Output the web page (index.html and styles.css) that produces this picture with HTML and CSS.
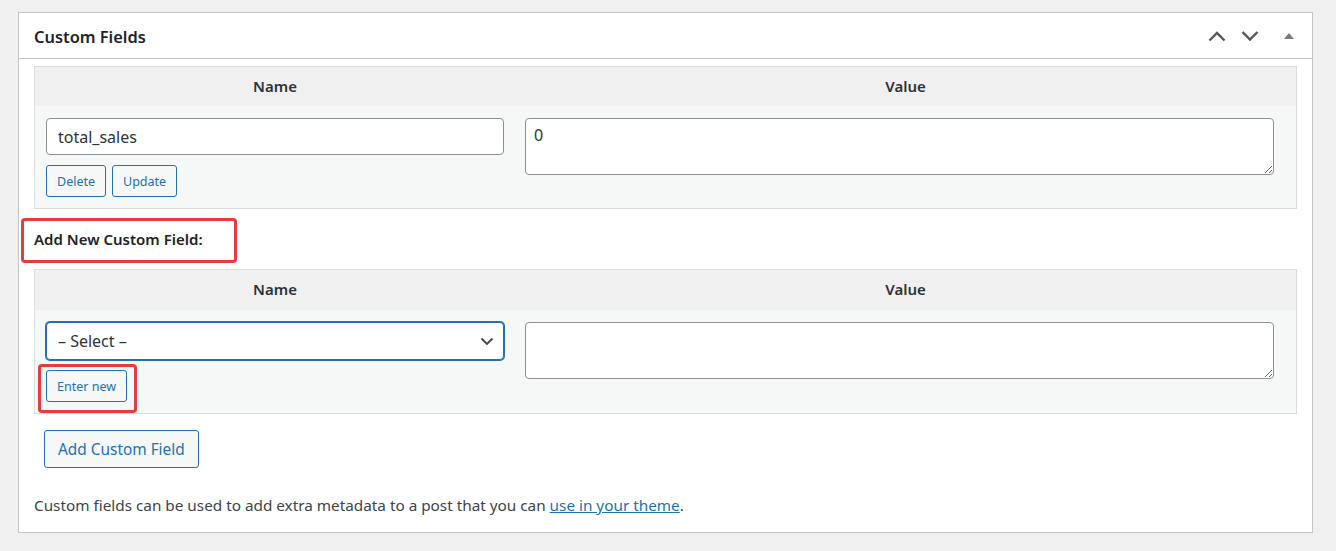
FILE: index.html
```html
<!DOCTYPE html>
<html>
<head>
<meta charset="utf-8">
<link rel="stylesheet" href="styles.css">
</head>
<body>
<div class="postbox">
  <div class="postbox-header">
    <h2 class="hndle">Custom Fields</h2>
    <div class="handle-actions">
      <button class="handle-btn" aria-label="Move up">
        <svg width="20" height="20" viewBox="0 0 20 20"><path d="M2.5 14.5 L10 7 L17.5 14.5" fill="none" stroke="#50575e" stroke-width="2.4"/></svg>
      </button>
      <button class="handle-btn" aria-label="Move down">
        <svg width="20" height="20" viewBox="0 0 20 20"><path d="M2.5 6 L10 13.5 L17.5 6" fill="none" stroke="#50575e" stroke-width="2.4"/></svg>
      </button>
      <button class="handle-btn toggle" aria-label="Toggle">
        <svg width="12" height="10" viewBox="0 0 12 10"><path d="M1 8 L6 2 L11 8 Z" fill="#787c82"/></svg>
      </button>
    </div>
  </div>
  <div class="inside">
    <table class="meta-table">
      <thead>
        <tr><th class="col-name">Name</th><th class="col-value">Value</th></tr>
      </thead>
      <tbody>
        <tr>
          <td class="col-name">
            <input class="text-input" type="text" value="total_sales">
            <div class="btn-row">
              <button class="btn-small">Delete</button>
              <button class="btn-small">Update</button>
            </div>
          </td>
          <td class="col-value">
            <textarea class="value-area">0</textarea>
          </td>
        </tr>
      </tbody>
    </table>

    <p class="add-title"><strong>Add New Custom Field:</strong><span class="highlight hl-title"></span></p>

    <table class="meta-table second">
      <thead>
        <tr><th class="col-name">Name</th><th class="col-value">Value</th></tr>
      </thead>
      <tbody>
        <tr>
          <td class="col-name">
            <div class="select-wrap">
              <select class="select-input"><option>– Select –</option></select>
              <svg class="select-arrow" width="16" height="16" viewBox="0 0 16 16"><path d="M2.5 5.5 L8 11 L13.5 5.5" fill="none" stroke="#3c434a" stroke-width="1.8"/></svg>
            </div>
            <div class="btn-row">
              <span class="enter-wrap">
                <button class="btn-small">Enter new</button>
                <span class="highlight hl-enter"></span>
              </span>
            </div>
          </td>
          <td class="col-value">
            <textarea class="value-area"></textarea>
          </td>
        </tr>
      </tbody>
    </table>

    <div class="submit-row">
      <button class="btn">Add Custom Field</button>
    </div>

    <p class="help">Custom fields can be used to add extra metadata to a post that you can <a href="#">use in your theme</a>.</p>
  </div>
</div>
</body>
</html>
```

FILE: styles.css
```css
* { box-sizing: border-box; }

html, body {
  margin: 0;
  padding: 0;
  background: #f0f0f1;
}

body {
  padding: 12px 23px 18px 18px;
  font-family: "Noto Sans", "Open Sans", sans-serif;
  font-size: 15px;
  color: #3c434a;
}

.postbox {
  background: #fff;
  border: 1px solid #c3c4c7;
  height: 521px;
}

.postbox-header {
  display: flex;
  align-items: center;
  justify-content: space-between;
  height: 46px;
  border-bottom: 1px solid #c3c4c7;
  padding: 0 0 0 15px;
}

.hndle {
  margin: 0;
  font-size: 16.4px;
  font-weight: 600;
  color: #1d2327;
  padding-top: 1px;
}

.handle-actions {
  display: flex;
  align-items: center;
}

.handle-btn {
  border: 0;
  background: none;
  padding: 0;
  width: 33px;
  height: 36px;
  display: flex;
  align-items: center;
  justify-content: center;
}

.handle-btn.toggle {
  width: 46px;
}

.inside {
  padding: 7px 15px 0 15px;
}

.meta-table {
  width: 100%;
  border: 1px solid #dcdcde;
  border-spacing: 0;
  background: #f6f7f7;
}

.meta-table th {
  background: #f0f0f1;
  height: 39px;
  font-size: 15px;
  font-weight: 600;
  color: #2c3338;
  text-align: center;
  padding: 0 0 2px 0;
}

.meta-table.second th {
  height: 40px;
}

.meta-table td {
  vertical-align: top;
  padding: 12px 11px 11px 11px;
}

.meta-table .col-name {
  width: 480px;
}

.meta-table td.col-value {
  padding: 12px 22px 11px 10px;
}

.text-input {
  display: block;
  width: 100%;
  height: 37px;
  border: 1px solid #8c8f94;
  border-radius: 4px;
  padding: 0 11px;
  font-family: inherit;
  font-size: 16px;
  color: #2c3338;
  background: #fff;
}

.value-area {
  display: block;
  width: 100%;
  height: 57px;
  border: 1px solid #8c8f94;
  border-radius: 4px;
  padding: 5px 8px;
  font-family: inherit;
  font-size: 16px;
  color: #2c3338;
  background: #fff;
  resize: vertical;
}

.btn-row {
  display: flex;
  gap: 6px;
  margin-top: 10px;
}

.btn-small {
  height: 32px;
  padding: 0 10px;
  border: 1px solid #2271b1;
  border-radius: 3px;
  background: #f6f7f7;
  color: #2271b1;
  font-family: inherit;
  font-size: 12.5px;
}

.enter-wrap {
  position: relative;
  display: inline-block;
}

.highlight {
  position: absolute;
  border: 3px solid #e63b3f;
  border-radius: 4px;
  pointer-events: none;
}

.hl-enter {
  left: -8px;
  top: -6px;
  right: -10px;
  bottom: -11px;
}

.add-title {
  position: relative;
  margin: 17px 0 16px 0;
  font-size: 15px;
  color: #1d2327;
  line-height: 27px;
}

.add-title strong {
  font-weight: 600;
}

.hl-title {
  left: -13px;
  top: -8px;
  width: 216px;
  height: 45px;
}

.select-wrap {
  position: relative;
}

.select-input {
  display: block;
  width: 100%;
  height: 38px;
  appearance: none;
  -webkit-appearance: none;
  border: 1px solid #2271b1;
  box-shadow: 0 0 0 1px #2271b1;
  border-radius: 4px;
  padding: 0 30px 0 11px;
  font-family: inherit;
  font-size: 16px;
  color: #2c3338;
  background: #fff;
  outline: none;
}

.select-arrow {
  position: absolute;
  right: 9px;
  top: 11px;
  pointer-events: none;
}

.submit-row {
  padding: 16px 0 0 10px;
}

.btn {
  height: 38px;
  padding: 0 13px;
  border: 1px solid #2271b1;
  border-radius: 3px;
  background: #f6f7f7;
  color: #2271b1;
  font-family: inherit;
  font-size: 15.4px;
}

.help {
  margin: 27px 0 0 0;
  font-size: 15.3px;
  color: #3c434a;
}

.help a {
  color: #2271b1;
}
```
